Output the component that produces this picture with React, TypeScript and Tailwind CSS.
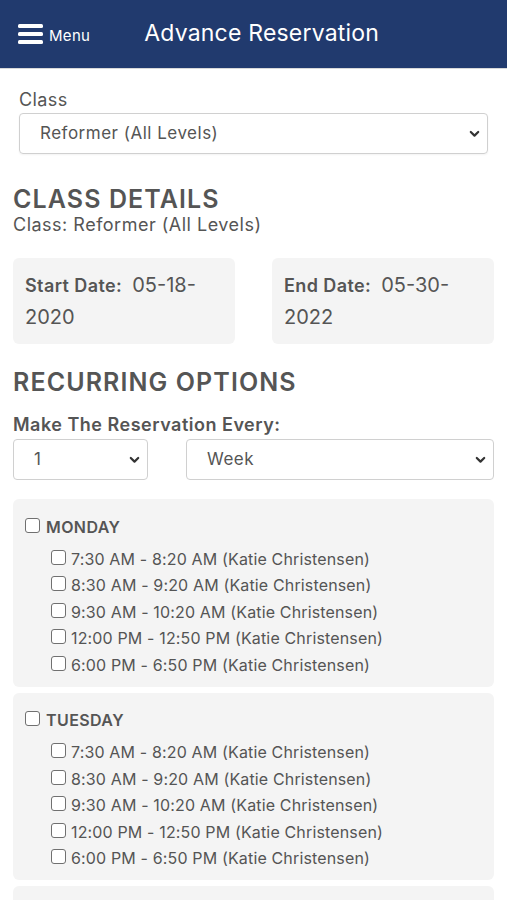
import React from "react";

const font = { fontFamily: 'Inter, "DejaVu Sans", sans-serif' };

function Chevron() {
  return (
    <svg width="11" height="8" viewBox="0 0 11 8" className="shrink-0">
      <path d="M1.8 2 L5.5 5.6 L9.2 2" fill="none" stroke="#333" strokeWidth="2.2" strokeLinecap="round" strokeLinejoin="round" />
    </svg>
  );
}

function Box() {
  return <span className="inline-block w-[15px] h-[15px] rounded-[3px] border border-[#707070] bg-white shrink-0" />;
}

const slots = [
  "7:30 AM - 8:20 AM (Katie Christensen)",
  "8:30 AM - 9:20 AM (Katie Christensen)",
  "9:30 AM - 10:20 AM (Katie Christensen)",
  "12:00 PM - 12:50 PM (Katie Christensen)",
  "6:00 PM - 6:50 PM (Katie Christensen)",
];

function Day({ name }: { name: string }) {
  return (
    <div className="bg-[#f4f4f4] rounded-md pl-[12px] pt-[18px] pb-[10px]">
      <div className="flex items-center gap-[6px] h-[16px]">
        <Box />
        <span className="text-[16px] font-semibold tracking-[0.4px] text-[#555] leading-none mt-[3px]">{name}</span>
      </div>
      <div className="pl-[26px] mt-[11px] flex flex-col">
        {slots.map((s) => (
          <div key={s} className="flex items-center gap-[5px] h-[26.5px]">
            <Box />
            <span className="text-[16px] tracking-[0.15px] text-[#555] leading-none mt-[3px]">{s}</span>
          </div>
        ))}
      </div>
    </div>
  );
}

export default function App() {
  return (
    <div style={font} className="w-[507px] h-[900px] overflow-hidden bg-white text-[#555]">
      <div className="h-[69px] bg-[#213a6e] border-b border-[#d8d8d8] flex items-center">
        <div className="flex items-center ml-[18px]">
          <svg width="25" height="20" viewBox="0 0 25 20">
            <rect x="0" y="0" width="25" height="4" rx="1.5" fill="white" />
            <rect x="0" y="8" width="25" height="4" rx="1.5" fill="white" />
            <rect x="0" y="16" width="25" height="4" rx="1.5" fill="white" />
          </svg>
          <span className="text-white text-[15px] tracking-[0.3px] ml-[6px] mt-[5px]">Menu</span>
        </div>
        <span className="text-white text-[23px] tracking-[0.2px] ml-[54px] -mt-[2px]">Advance Reservation</span>
      </div>

      <div className="px-[19px] pt-[20px]">
        <div className="text-[18px] tracking-[0.4px] leading-[22px]">Class</div>
        <div className="mt-[2px] h-[41px] border border-[#d0d0d0] rounded-[4px] flex items-center justify-between pl-[20px] pr-[7px] shadow-[0_1px_2px_rgba(0,0,0,0.05)]">
          <span className="text-[17px] tracking-[0.5px] text-[#555]">Reformer (All Levels)</span>
          <Chevron />
        </div>
      </div>

      <div className="px-[13px]">
        <div className="mt-[31px] text-[25px] font-semibold tracking-[1.1px] leading-[28px] text-[#555]">CLASS DETAILS</div>
        <div className="mt-[1px] text-[18px] tracking-[0.5px] leading-[22px]">Class: Reformer (All Levels)</div>

        <div className="flex justify-between mt-[22px]">
          <div className="w-[222px] h-[86px] bg-[#f4f4f4] rounded-md pl-[12px] pr-[20px] pt-[12px]">
            <div className="leading-[31px]">
              <span className="text-[18px] font-semibold tracking-[0.4px]">Start Date:</span>
              <span className="text-[20px] ml-[10px]">05-18-2020</span>
            </div>
          </div>
          <div className="w-[222px] h-[86px] bg-[#f4f4f4] rounded-md pl-[12px] pr-[20px] pt-[12px]">
            <div className="leading-[31px]">
              <span className="text-[18px] font-semibold tracking-[0.4px]">End Date:</span>
              <span className="text-[20px] ml-[10px]">05-30-2022</span>
            </div>
          </div>
        </div>

        <div className="mt-[24px] text-[25px] font-semibold tracking-[1.1px] leading-[28px]">RECURRING OPTIONS</div>
        <div className="mt-[18px] text-[18px] font-semibold tracking-[0.5px] leading-[22px]">Make The Reservation Every:</div>
        <div className="flex justify-between mt-[3px]">
          <div className="w-[135px] h-[41px] border border-[#d0d0d0] rounded-[4px] flex items-center justify-between pl-[20px] pr-[7px]">
            <span className="text-[17px]">1</span>
            <Chevron />
          </div>
          <div className="w-[308px] h-[41px] border border-[#d0d0d0] rounded-[4px] flex items-center justify-between pl-[20px] pr-[7px]">
            <span className="text-[17px] tracking-[0.5px]">Week</span>
            <Chevron />
          </div>
        </div>

        <div className="mt-[19px] flex flex-col gap-[6px]">
          <Day name="MONDAY" />
          <Day name="TUESDAY" />
          <div className="bg-[#f4f4f4] rounded-md h-[60px]" />
        </div>
      </div>
    </div>
  );
}
